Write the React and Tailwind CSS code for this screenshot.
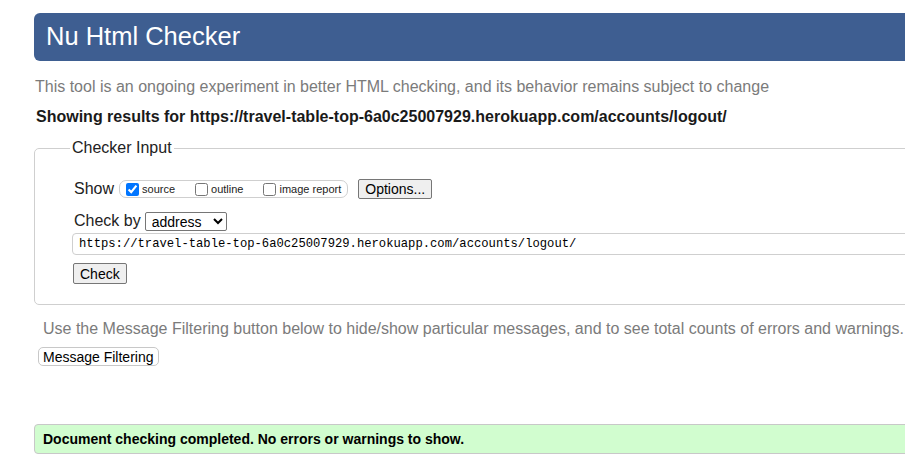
export default function App() {
    return (
        <div className="w-[905px] h-[462px] overflow-hidden bg-white font-['Liberation_Sans',Arial,sans-serif] text-[#222]">
            <div className="w-[1000px] pl-[34px] pt-[13px]">
                {/* Header */}
                <div className="h-[48px] flex items-center pl-[12px] rounded-l-[6px] bg-[#3e5e91]">
                    <h1 className="text-[25.5px] leading-none text-white">Nu Html Checker</h1>
                </div>

                <p className="mt-[16px] ml-[1px] text-[16px] leading-[20px] text-[#7b7b7b]">
                    This tool is an ongoing experiment in better HTML checking, and its behavior remains subject to change
                </p>
                <p className="mt-[10px] ml-[2px] text-[16px] leading-[20px] font-bold text-[#1a1a1a]">
                    Showing results for https://travel-table-top-6a0c25007929.herokuapp.com/accounts/logout/
                </p>

                {/* Checker input */}
                <fieldset className="mt-[11px] border border-[#cfcfcf] rounded-l-[5px] pl-[39px] pt-[21px] pb-[20px]">
                    <legend className="-ml-[4px] px-[2px] text-[16px] leading-[20px] text-[#222]">Checker Input</legend>

                    <div className="flex items-center h-[20px]">
                        <span className="text-[16px] leading-[20px]">Show</span>
                        <div className="ml-[5px] flex items-center h-[18px] border border-[#cfcfcf] rounded-[7px] pl-[6px] pr-[6px] text-[11px]">
                            <label className="flex items-center">
                                <input type="checkbox" defaultChecked className="w-[13px] h-[13px]" />
                                <span className="ml-[3px]">source</span>
                            </label>
                            <label className="flex items-center ml-[20px]">
                                <input type="checkbox" className="w-[13px] h-[13px]" />
                                <span className="ml-[3px]">outline</span>
                            </label>
                            <label className="flex items-center ml-[20px]">
                                <input type="checkbox" className="w-[13px] h-[13px]" />
                                <span className="ml-[3px]">image report</span>
                            </label>
                        </div>
                        <button type="button" className="ml-[10px] h-[20px] px-[6px] text-[14px] leading-none bg-[#efefef] border border-[#767676] rounded-[2px] text-black">
                            Options...
                        </button>
                    </div>

                    <div className="flex items-center mt-[12px] h-[20px]">
                        <span className="text-[16px] leading-[20px]">Check by</span>
                        <select defaultValue="address" className="ml-[4px] w-[82px] h-[19px] pl-[2px] text-[14px] leading-none bg-white border border-[#767676] rounded-[2px] text-black">
                            <option value="address">address</option>
                            <option value="file">file upload</option>
                            <option value="text">text input</option>
                        </select>
                    </div>

                    <input
                        type="text"
                        defaultValue="https://travel-table-top-6a0c25007929.herokuapp.com/accounts/logout/"
                        className="block mt-[2px] -ml-[2px] w-[900px] h-[22px] px-[6px] font-['Liberation_Mono',monospace] text-[12.2px] text-black border border-[#cfcfcf] rounded-[4px]"
                    />

                    <button type="button" className="block mt-[8px] -ml-[1px] h-[21px] px-[6px] text-[14px] leading-none bg-[#efefef] border border-[#767676] rounded-[2px] text-black">
                        Check
                    </button>
                </fieldset>

                <p className="mt-[14px] ml-[9px] text-[16px] leading-[20px] text-[#7b7b7b]">
                    Use the Message Filtering button below to hide/show particular messages, and to see total counts of errors and warnings.
                </p>
                <button type="button" className="block mt-[8px] ml-[4px] h-[19px] px-[4px] text-[14px] leading-none bg-white border border-[#c8c8c8] rounded-[5px] text-black">
                    Message Filtering
                </button>

                {/* Result */}
                <div className="mt-[58px] h-[30px] flex items-center pl-[8px] bg-[#d1fdcf] border border-[#c8c8c8] rounded-l-[4px]">
                    <p className="text-[14px] font-bold text-black">Document checking completed. No errors or warnings to show.</p>
                </div>
            </div>
        </div>
    );
}
